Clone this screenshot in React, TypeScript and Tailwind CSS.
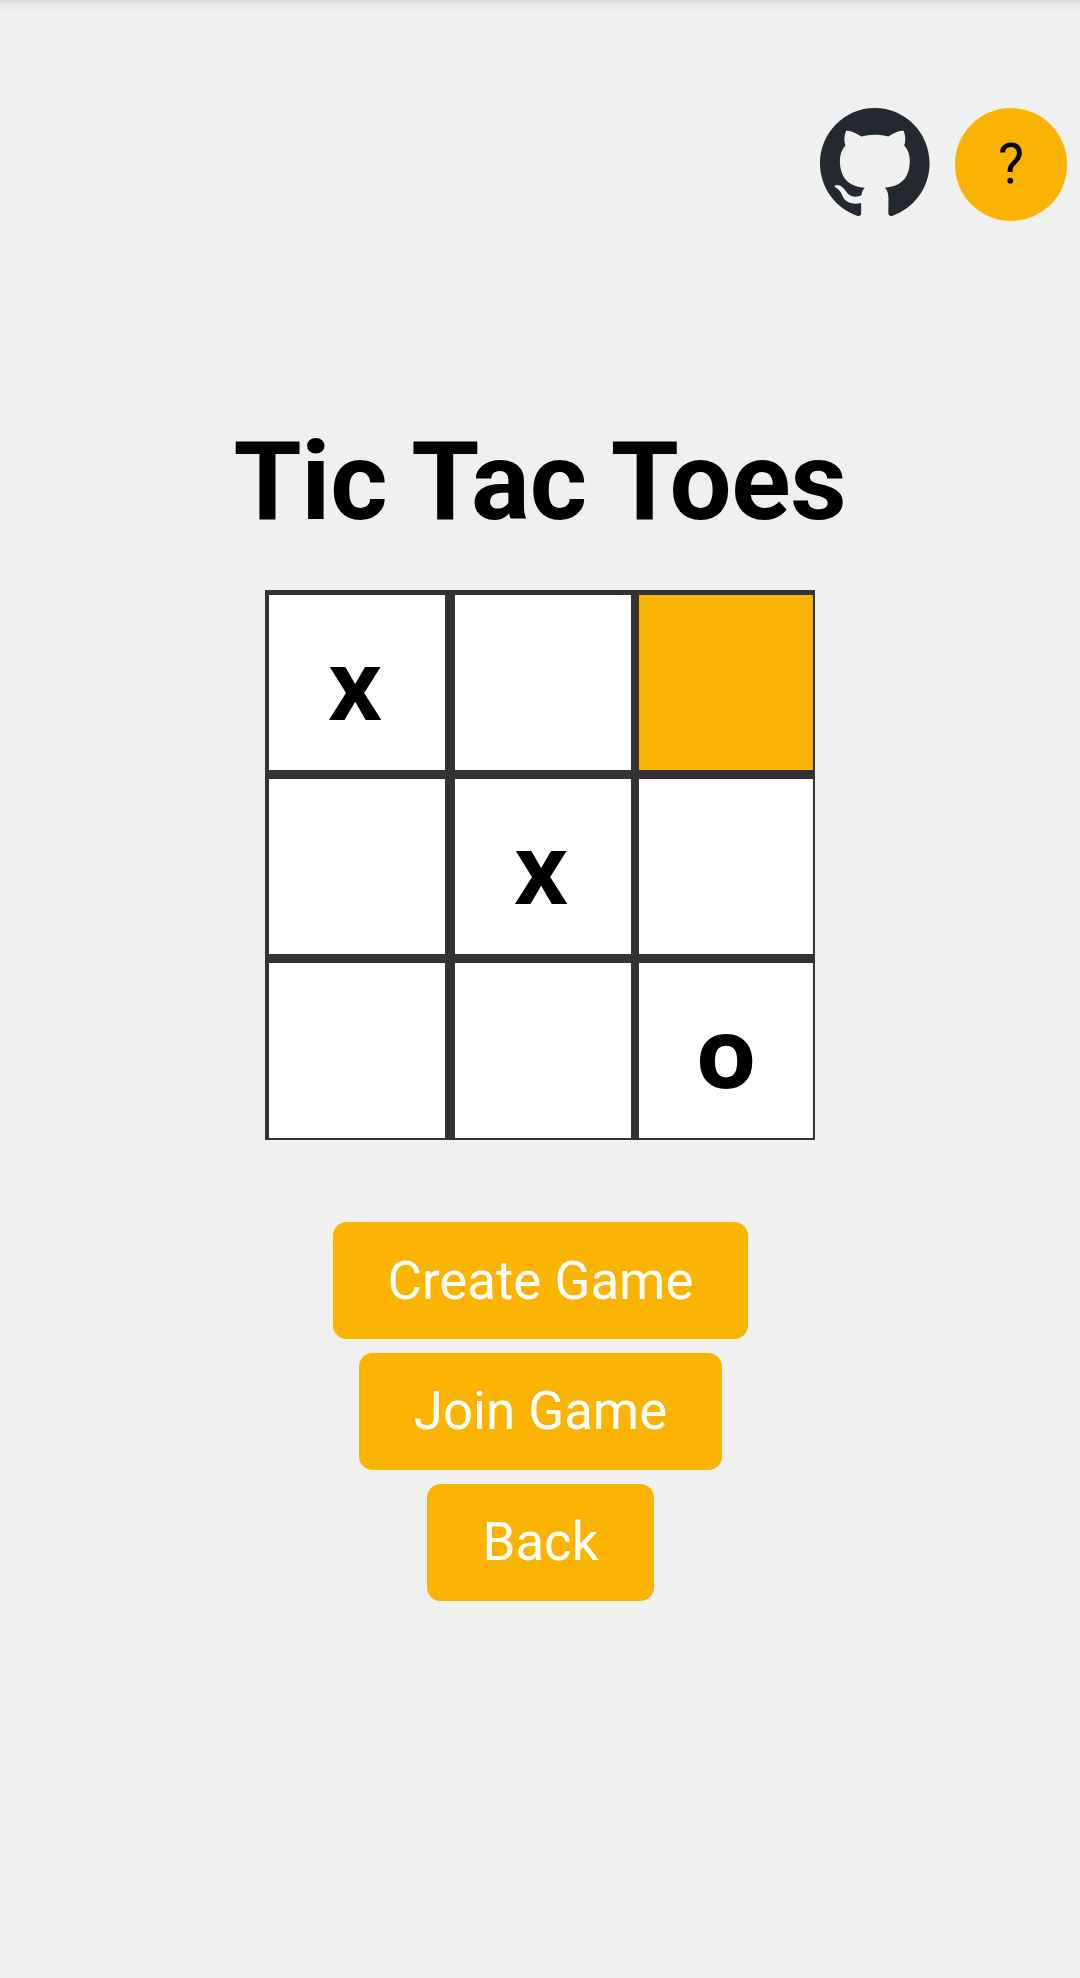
const GITHUB_MARK =
  "M48.854 0C21.839 0 0 22 0 49.217c0 21.756 13.993 40.172 33.405 46.69 2.427.49 3.316-1.059 3.316-2.362 0-1.141-.08-5.052-.08-9.127-13.59 2.934-16.42-5.867-16.42-5.867-2.184-5.704-5.42-7.17-5.42-7.17-4.448-3.015.324-3.015.324-3.015 4.934.326 7.523 5.052 7.523 5.052 4.367 7.496 11.404 5.378 14.235 4.074.404-3.178 1.699-5.378 3.074-6.6-10.839-1.141-22.243-5.378-22.243-24.283 0-5.378 1.94-9.778 5.014-13.2-.485-1.222-2.184-6.275.486-13.038 0 0 4.125-1.304 13.426 5.052a46.97 46.97 0 0 1 12.214-1.63c4.125 0 8.33.571 12.213 1.63 9.302-6.356 13.427-5.052 13.427-5.052 2.67 6.763.97 11.816.485 13.038 3.155 3.422 5.015 7.822 5.015 13.2 0 18.905-11.404 23.06-22.324 24.283 1.78 1.548 3.316 4.481 3.316 9.126 0 6.6-.08 11.897-.08 13.526 0 1.304.89 2.853 3.316 2.364 19.412-6.52 33.405-24.935 33.405-46.691C97.707 22 75.788 0 48.854 0z";

const CELLS = ["x", "", "", "", "x", "", "", "", "o"];
const HIGHLIGHTED = 2;

function Board() {
  return (
    <div className="mt-[49px] grid h-[550px] w-[550px] grid-cols-[178px_176px_174px] grid-rows-[175px_175px_175px] gap-x-[8px] gap-y-[9px] bg-[#333333] pt-[5px] pl-[4px]">
      {CELLS.map((mark, i) => (
        <div
          key={i}
          className={`flex max-w-[176px] items-center justify-center font-['Open_Sans',sans-serif] text-[97px] leading-none font-bold text-black ${
            i === HIGHLIGHTED ? "bg-[#fab400]" : "bg-white"
          }`}
        >
          {mark && (
            <span className={mark === "x" ? "-mt-[1px] -ml-[4px] scale-x-[0.95]" : "-mt-[1px] scale-x-[1.02]"}>
              {mark}
            </span>
          )}
        </div>
      ))}
    </div>
  );
}

const ACTIONS = [
  { label: "Create Game", style: "w-[415px] pt-[2px]" },
  { label: "Join Game", style: "w-[363px]" },
  { label: "Back", style: "w-[227px]" },
];

export default function App() {
  return (
    <div className="flex h-[1978px] w-full flex-col overflow-hidden bg-[#f0f0f0] font-['Roboto',sans-serif] text-black">
      <div className="h-[14px] shrink-0 bg-linear-to-b from-[#d8d8d8] via-[#e8e8e8] via-25% to-[#f0f0f0]" />
      <header className="mt-[94px] flex h-[113px] shrink-0 justify-end gap-[25px] pr-[13px]">
        <a className="block w-[110px]">
          <svg viewBox="0 0 98 96" className="h-[108px] w-[110px] fill-[#24292f]" preserveAspectRatio="none">
            <path fillRule="evenodd" clipRule="evenodd" d={GITHUB_MARK} />
          </svg>
        </a>
        <button className="flex h-[113px] w-[112px] items-center justify-center rounded-full bg-[#fab400] text-[55px] leading-none">
          ?
        </button>
      </header>
      <main className="flex flex-col items-center">
        <h1 className="mt-[203px] mb-[2px] h-[115px] text-[110px] leading-[115px] font-bold tracking-[-0.3px] whitespace-nowrap">
          Tic Tac Toes
        </h1>
        <Board />
        <div className="mt-[82px] flex flex-col items-center gap-[14px] pl-[1px]">
          {ACTIONS.map(({ label, style }) => (
            <button
              key={label}
              className={`flex h-[117px] items-center justify-center rounded-[13.75px] bg-[#fab400] text-[52.8px] leading-none whitespace-nowrap text-white ${style}`}
            >
              {label}
            </button>
          ))}
        </div>
      </main>
    </div>
  );
}
